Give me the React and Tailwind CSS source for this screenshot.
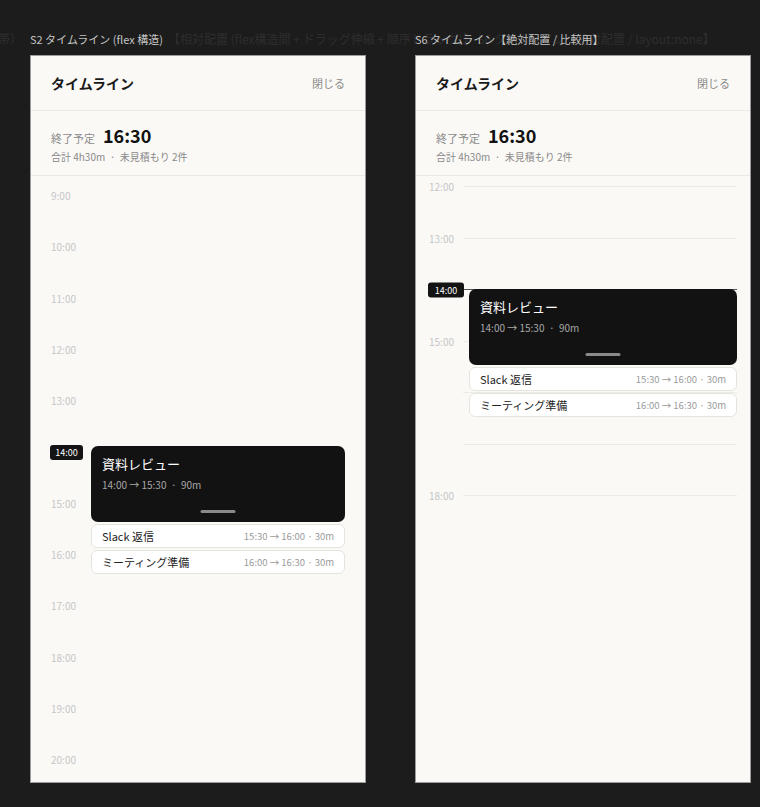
import React from 'react';

const font = { fontFamily: '"Noto Sans CJK JP", "Noto Sans", sans-serif' };

const tasks = [
  { title: 'Slack 返信', time: '15:30 → 16:00 · 30m' },
  { title: 'ミーティング準備', time: '16:00 → 16:30 · 30m' },
];

function Header() {
  return (
    <>
      <div className="h-[55px] flex items-center justify-between px-5 border-b border-[#ebe9e4] shrink-0">
        <div className="text-[14px] font-bold text-[#1a1a1a]">タイムライン</div>
        <div className="text-[11px] text-[#8a8a8a]">閉じる</div>
      </div>
      <div className="h-[65px] px-5 pt-[11px] border-b border-[#ebe9e4] shrink-0">
        <div className="flex items-baseline gap-2 h-[26px]">
          <span className="text-[11px] text-[#8a8a8a]">終了予定</span>
          <span className="text-[18px] font-bold text-[#111] leading-[26px]">16:30</span>
        </div>
        <div className="text-[10px] text-[#8a8a8a] leading-[16px] mt-[1px] whitespace-pre">合計 4h30m  ·  未見積もり 2件</div>
      </div>
    </>
  );
}

function Events() {
  return (
    <div>
      <div className="relative h-[76px] rounded-[7px] bg-[#121212] pl-[11px] pt-[9px]">
        <div className="text-[13px] leading-[18px] text-white">資料レビュー</div>
        <div className="text-[10px] leading-[14px] text-[#a8a8a8] mt-[5px] whitespace-pre">14:00 → 15:30  ·  90m</div>
        <div className="absolute bottom-[9px] left-1/2 -translate-x-1/2 w-[35px] h-[3px] rounded-full bg-[#8a8a8a]" />
      </div>
      {tasks.map(t => (
        <div key={t.title} className="mt-[2px] h-[24px] bg-white border border-[#e6e4df] rounded-[6px] flex items-center justify-between px-[10px]">
          <span className="text-[11px] text-[#222]">{t.title}</span>
          <span className="text-[9.5px] text-[#9a9a9a]">{t.time}</span>
        </div>
      ))}
    </div>
  );
}

function Badge({ className }) {
  return (
    <div className={`h-[15px] rounded-[3px] bg-[#141414] text-white text-[9px] leading-none flex items-center justify-center ${className}`}>14:00</div>
  );
}

function FlexPanel() {
  const hours = [9, 10, 11, 12, 13, 14, 15, 16, 17, 18, 19, 20];
  return (
    <div className="w-[336px] h-[728px] bg-[#faf9f6] border border-[#9c9c9c] flex flex-col">
      <Header />
      <div className="relative flex-1 overflow-hidden pt-[13px]">
        {hours.map(h => (
          <div key={h} className="h-[51.3px] pl-[20px]">
            {h === 14 ? (
              <Badge className="w-[33px] -ml-[1px]" />
            ) : (
              <div className="text-[10px] leading-[14px] text-[#c6c6c6]">{h}:00</div>
            )}
          </div>
        ))}
        <div className="absolute top-[270px] left-[60px] right-[20px]">
          <Events />
        </div>
      </div>
    </div>
  );
}

function AbsPanel() {
  const hours = [12, 13, 14, 15, 16, 17, 18];
  const hidden = [16, 17];
  return (
    <div className="w-[336px] h-[728px] bg-[#faf9f6] border border-[#9c9c9c] flex flex-col">
      <Header />
      <div className="relative flex-1 overflow-hidden">
        {hours.map((h, i) => {
          const top = 10 + i * 51.5;
          return (
            <div key={h}>
              <div
                className={`absolute left-[47px] right-[13px] h-px ${h === 14 ? 'bg-[#555]' : 'bg-[#ecebe7]'}`}
                style={{ top }}
              />
              {h === 14 ? (
                <div className="absolute left-[12px] -translate-y-1/2" style={{ top: top + 0.5 }}>
                  <Badge className="w-[36px]" />
                </div>
              ) : !hidden.includes(h) ? (
                <div className="absolute left-[13px] -translate-y-1/2 text-[10px] leading-[14px] text-[#c6c6c6]" style={{ top: top + 1 }}>
                  {h}:00
                </div>
              ) : null}
            </div>
          );
        })}
        <div className="absolute top-[113px] left-[53px] right-[13px]">
          <Events />
        </div>
      </div>
    </div>
  );
}

export default function App() {
  return (
    <div className="relative w-[760px] h-[807px] bg-[#1c1c1c] overflow-hidden" style={font}>
      <div className="absolute top-[30px] left-0 right-0 h-[18px] text-[12px] leading-[18px] text-[#2e2e2e] whitespace-nowrap">
        <span className="absolute right-[738px]">（時間帯）</span>
        <span className="absolute left-[168px]">【相対配置 (flex構造間 + ドラッグ伸縮 + 順序ドラッグ)】 S6 タイムライン【絶対配置 / layout:none】</span>
      </div>
      <div className="relative flex gap-[49px] pl-[30px] pt-[30px]">
        <div>
          <div className="h-[25px] text-[11px] leading-[18px] text-[#c4c4c4]">S2 タイムライン (flex 構造)</div>
          <FlexPanel />
        </div>
        <div>
          <div className="h-[25px] text-[11px] leading-[18px] text-[#c4c4c4]">S6 タイムライン【絶対配置 / 比較用】</div>
          <AbsPanel />
        </div>
      </div>
    </div>
  );
}
